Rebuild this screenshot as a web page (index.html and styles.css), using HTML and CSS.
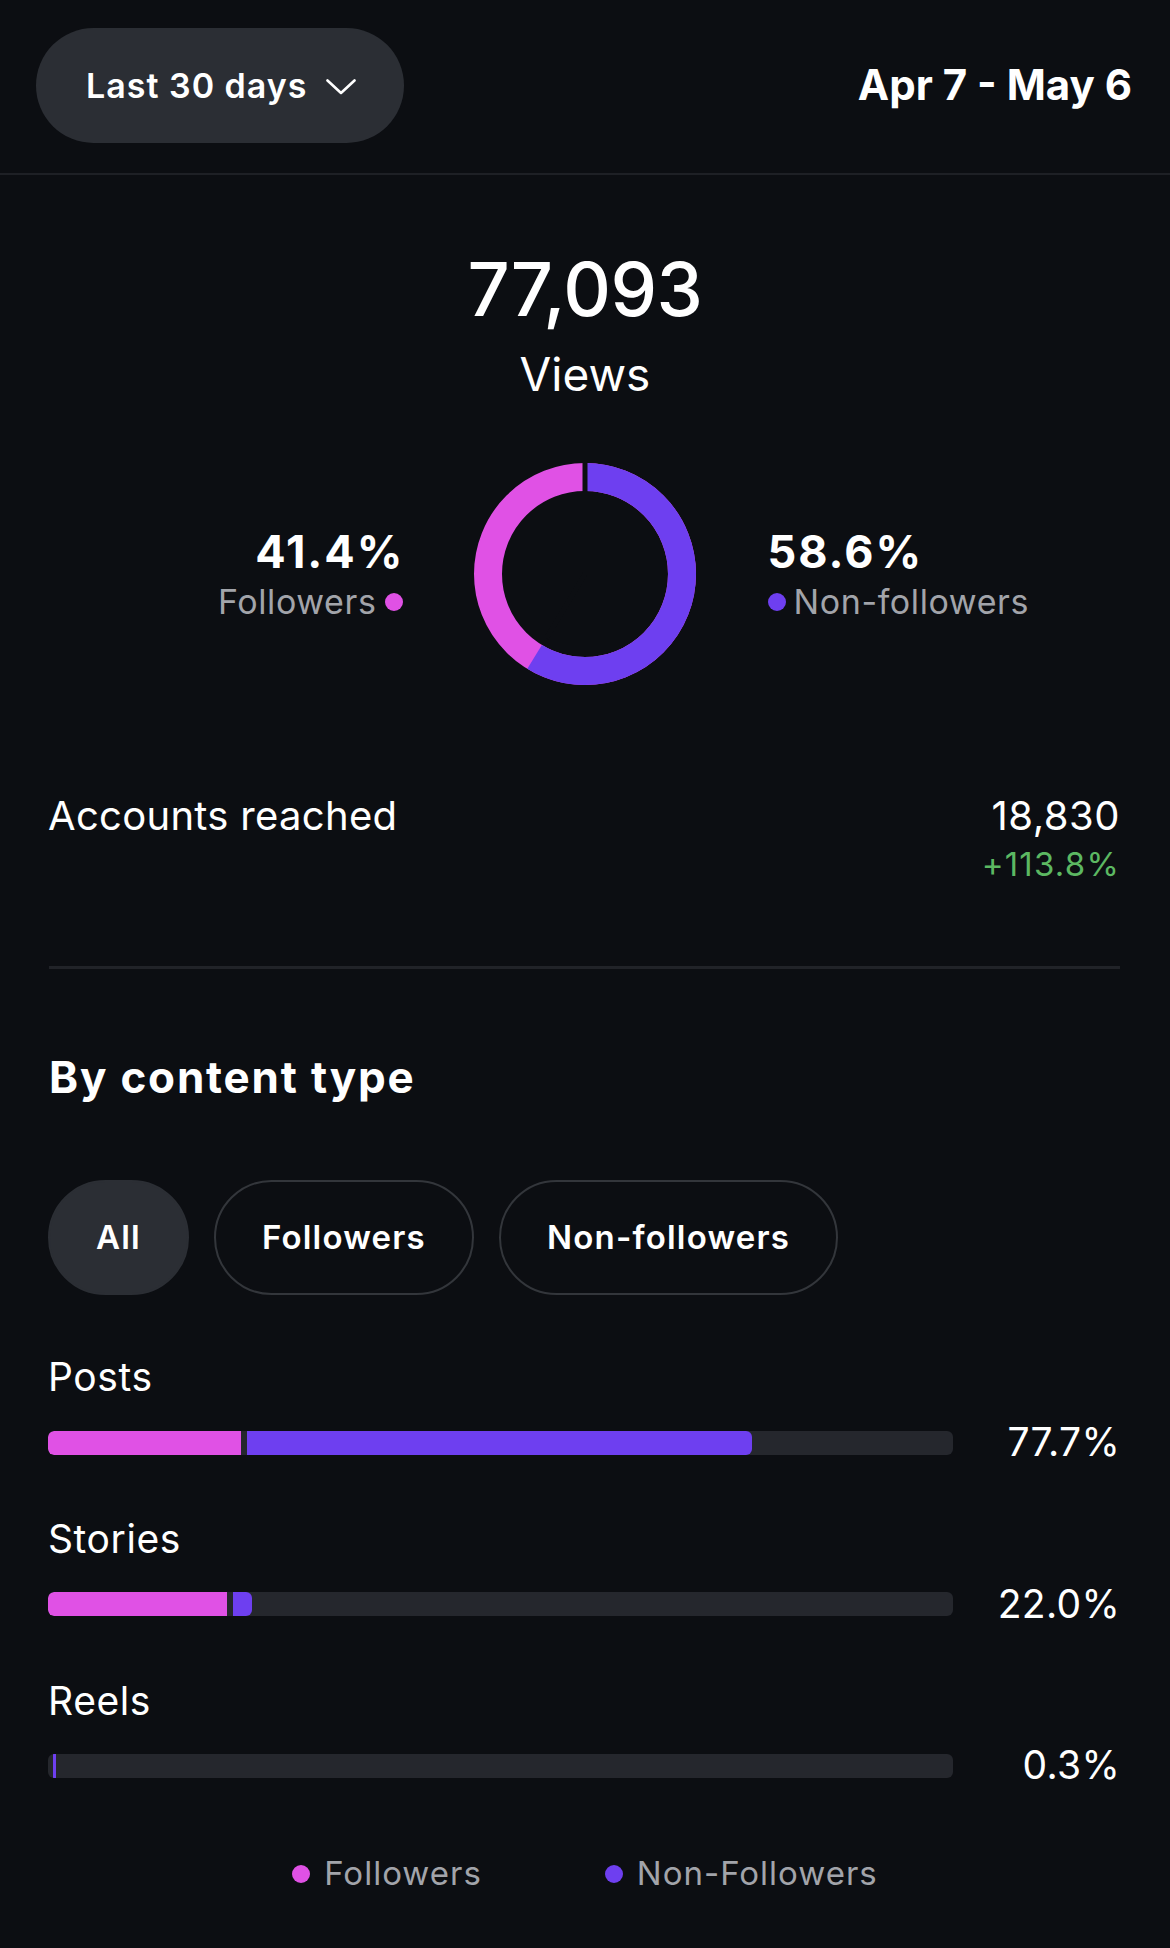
FILE: index.html
```html
<!DOCTYPE html>
<html lang="en">
<head>
<meta charset="utf-8">
<title>Views insights</title>
<link rel="stylesheet" href="styles.css">
</head>
<body>
<div class="screen">
  <header class="topbar">
    <button class="range-pill">
      <span>Last 30 days</span>
      <svg class="chev" width="30" height="16" viewBox="0 0 30 16"><path d="M1.5 1.5 L15 14 L28.5 1.5" fill="none" stroke="#ffffff" stroke-width="2.6" stroke-linecap="round" stroke-linejoin="round"/></svg>
    </button>
    <div class="date-range">Apr 7 - May 6</div>
  </header>

  <section class="hero">
    <div class="big-number">77,093</div>
    <div class="big-label">Views</div>
    <div class="donut-row">
      <div class="side side-left">
        <div class="pct">41.4%</div>
        <div class="legend-line"><span>Followers</span><i class="dot dot-pink"></i></div>
      </div>
      <svg class="donut" width="222" height="222" viewBox="0 0 222 222">
        <circle cx="111" cy="111" r="97" fill="none" stroke="#e051e5" stroke-width="28"/>
        <circle cx="111" cy="111" r="97" fill="none" stroke="#6e3ff0" stroke-width="28" stroke-dasharray="357.2 700" transform="rotate(-90 111 111)"/>
        <line x1="111" y1="-2" x2="111" y2="32" stroke="#0c0e12" stroke-width="5"/>
        <line x1="111" y1="111" x2="111" y2="232" stroke="#0c0e12" stroke-width="5" transform="rotate(31 111 111)" stroke-dasharray="75 200"/>
      </svg>
      <div class="side side-right">
        <div class="pct">58.6%</div>
        <div class="legend-line"><i class="dot dot-purple"></i><span>Non-followers</span></div>
      </div>
    </div>
  </section>

  <section class="reach">
    <div class="reach-label">Accounts reached</div>
    <div class="reach-values">
      <div class="reach-num">18,830</div>
      <div class="reach-delta">+113.8%</div>
    </div>
  </section>

  <div class="content">
    <hr class="divider">
    <h2 class="section-title">By content type</h2>
    <div class="chips">
      <button class="chip chip-active">All</button>
      <button class="chip">Followers</button>
      <button class="chip">Non-followers</button>
    </div>

    <div class="types">
      <div class="type-row">
        <div class="type-label">Posts</div>
        <div class="bar-row">
          <div class="track">
            <span class="seg seg-pink" style="width:21.3%"></span>
            <span class="seg seg-purple" style="width:55.8%"></span>
          </div>
          <div class="type-pct">77.7%</div>
        </div>
      </div>
      <div class="type-row">
        <div class="type-label">Stories</div>
        <div class="bar-row">
          <div class="track">
            <span class="seg seg-pink" style="width:19.8%"></span>
            <span class="seg seg-purple" style="width:2.1%"></span>
          </div>
          <div class="type-pct">22.0%</div>
        </div>
      </div>
      <div class="type-row">
        <div class="type-label">Reels</div>
        <div class="bar-row">
          <div class="track">
            <span class="seg seg-pink seg-tiny" style="width:0.3%"></span>
            <span class="seg seg-purple seg-sliver" style="width:3px"></span>
          </div>
          <div class="type-pct">0.3%</div>
        </div>
      </div>
    </div>

    <div class="legend">
      <div class="legend-item"><i class="dot dot-pink"></i><span>Followers</span></div>
      <div class="legend-item"><i class="dot dot-purple"></i><span>Non-Followers</span></div>
    </div>
  </div>
</div>
</body>
</html>
```

FILE: styles.css
```css
* { box-sizing: border-box; }

html, body {
  margin: 0;
  padding: 0;
  background: #0c0e12;
}

body {
  font-family: Inter, "Noto Sans", "Liberation Sans", sans-serif;
  color: #f5f5f7;
}

.screen {
  width: 1170px;
  min-height: 1948px;
  background: #0c0e12;
}

/* Header */
.topbar {
  display: flex;
  align-items: center;
  justify-content: space-between;
  padding: 28px 38px 30px 36px;
  border-bottom: 2px solid #1e2025;
}

.range-pill {
  display: flex;
  align-items: center;
  gap: 19px;
  height: 115px;
  padding: 0 48px 0 50px;
  border: none;
  border-radius: 58px;
  background: #2b2e34;
  color: #ffffff;
  font-family: inherit;
  font-size: 34px;
  font-weight: 600;
  letter-spacing: 1px;
  line-height: 1;
}

.chev { display: block; margin-top: 2px; }

.date-range {
  font-size: 42px;
  font-weight: 700;
  line-height: 1.2;
  color: #ffffff;
}

/* Hero */
.hero {
  display: flex;
  flex-direction: column;
  align-items: center;
}

.big-number {
  margin-top: 70px;
  font-size: 74px;
  font-weight: 500;
  letter-spacing: -0.5px;
  line-height: 1.2;
  color: #ffffff;
}

.big-label {
  margin-top: 13px;
  font-size: 46px;
  font-weight: 400;
  line-height: 1.2;
  color: #ffffff;
}

.donut-row {
  margin-top: 61px;
  width: 100%;
  display: flex;
  align-items: center;
}

.donut { display: block; flex: none; }

.side {
  flex: 1;
  display: flex;
  flex-direction: column;
}

.side-left { align-items: flex-end; padding-right: 71px; }
.side-right { align-items: flex-start; padding-left: 72px; }

.pct {
  font-size: 45px;
  font-weight: 700;
  letter-spacing: 2px;
  line-height: 1.2;
  color: #ffffff;
}

.side-left .pct { margin-right: -2px; }

.legend-line {
  margin-top: 3px;
  display: flex;
  align-items: center;
  gap: 8px;
  font-size: 34px;
  letter-spacing: 0.6px;
  line-height: 1.2;
  color: #a2a4aa;
}

.dot {
  display: inline-block;
  width: 18px;
  height: 18px;
  border-radius: 50%;
  flex: none;
}

.dot-pink { background: #e051e5; }
.dot-purple { background: #6e3ff0; }

/* Reach */
.reach {
  margin-top: 107px;
  display: flex;
  justify-content: space-between;
  align-items: flex-start;
  padding: 0 50px 0 48px;
}

.reach-label {
  font-size: 40px;
  letter-spacing: 0.3px;
  line-height: 1.2;
  color: #ffffff;
}

.reach-values {
  display: flex;
  flex-direction: column;
  align-items: flex-end;
}

.reach-num {
  font-size: 40px;
  letter-spacing: 0.5px;
  line-height: 1.2;
  color: #ffffff;
}

.reach-delta {
  margin-top: 5px;
  font-size: 33px;
  letter-spacing: 1.2px;
  line-height: 1.2;
  color: #5cb862;
}

/* Content type */
.content {
  padding: 0 50px 0 48px;
}

.divider {
  margin: 81px 0 0 1px;
  border: none;
  height: 3px;
  background: #212328;
}

.section-title {
  margin: 82px 0 0 1px;
  font-size: 44px;
  font-weight: 700;
  letter-spacing: 1.8px;
  line-height: 1.2;
  color: #ffffff;
}

.chips {
  margin-top: 77px;
  display: flex;
  gap: 25px;
}

.chip {
  height: 115px;
  padding: 0 46px;
  border-radius: 58px;
  border: 2px solid #33363b;
  background: transparent;
  color: #ffffff;
  font-family: inherit;
  font-size: 33px;
  font-weight: 600;
  letter-spacing: 1.2px;
  line-height: 1;
}

.chip-active {
  background: #2b2e34;
  border-color: #2b2e34;
}

.types {
  margin-top: 59px;
  display: flex;
  flex-direction: column;
  gap: 50px;
}

.type-label {
  font-size: 39px;
  letter-spacing: 0.6px;
  line-height: 1.2;
  color: #ffffff;
}

.bar-row {
  margin-top: 18px;
  display: flex;
  align-items: center;
}

.track {
  width: 905px;
  height: 24px;
  border-radius: 6px;
  background: #25272d;
  display: flex;
  overflow: hidden;
}

.seg { display: block; height: 100%; }

.seg-pink {
  background: #e051e5;
  border-radius: 6px 0 0 6px;
  margin-right: 6px;
}

.seg-purple {
  background: #6e3ff0;
  border-radius: 0 6px 6px 0;
}

.seg-tiny { margin-right: 2px; background: transparent; }
.seg-sliver { border-radius: 0; }

.type-pct {
  flex: 1;
  text-align: right;
  font-size: 39px;
  letter-spacing: 0.3px;
  line-height: 1.2;
  color: #ffffff;
}

.legend {
  margin-top: 65px;
  display: flex;
  justify-content: center;
  gap: 123px;
  padding-left: 2px;
}

.legend-item {
  display: flex;
  align-items: center;
  gap: 14px;
  font-size: 33px;
  letter-spacing: 1px;
  line-height: 1.2;
  color: #a2a4aa;
}
```
